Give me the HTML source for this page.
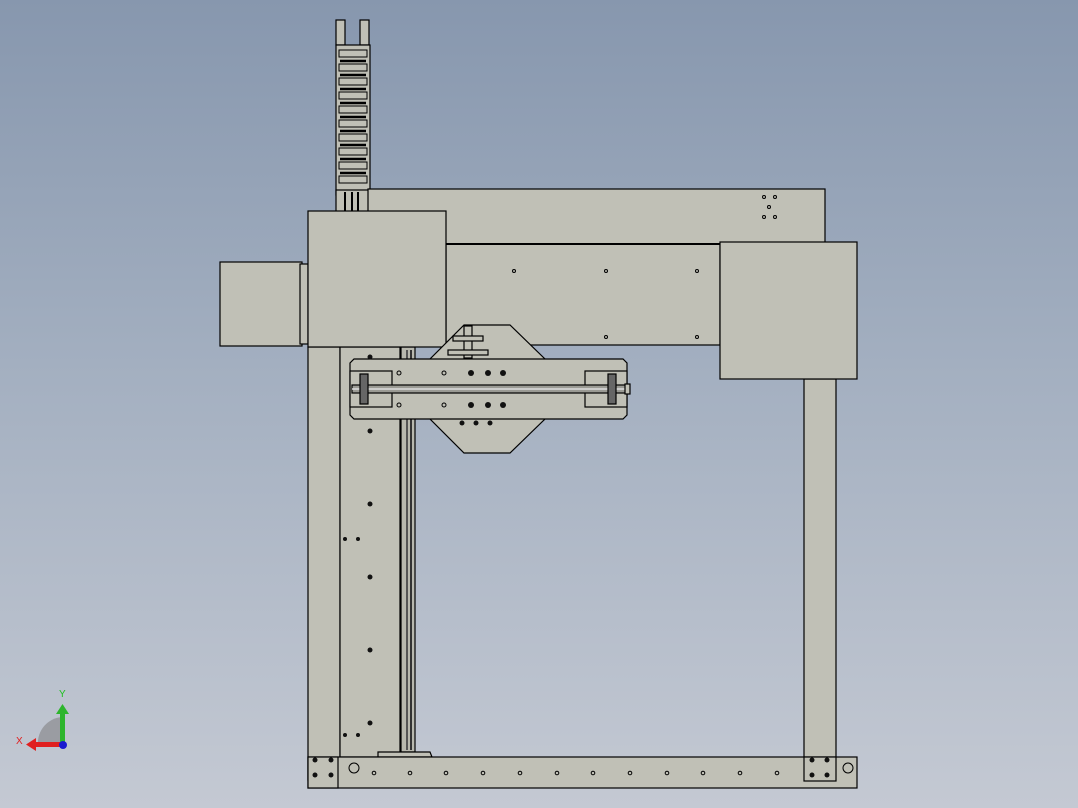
<!DOCTYPE html>
<html><head><style>
html,body{margin:0;padding:0;width:1078px;height:808px;overflow:hidden}
body{background:linear-gradient(to bottom,#8797ae 0%,#a3afc0 45%,#c4c9d3 100%)}
svg{position:absolute;left:0;top:0}
</style></head><body>
<svg width="1078" height="808" viewBox="0 0 1078 808" xmlns="http://www.w3.org/2000/svg">
<g stroke="#000" stroke-width="1.2" fill="#c0c0b6">
<!-- cable chain -->
<rect x="336" y="20" width="9" height="25"/><rect x="360" y="20" width="9" height="25"/>
<rect x="336" y="45" width="34" height="150" fill="#c0c0b6"/>
<g stroke-width="1">
<rect x="339" y="50" width="28" height="7"/><rect x="339" y="64" width="28" height="7"/>
<rect x="339" y="78" width="28" height="7"/><rect x="339" y="92" width="28" height="7"/>
<rect x="339" y="106" width="28" height="7"/><rect x="339" y="120" width="28" height="7"/>
<rect x="339" y="134" width="28" height="7"/><rect x="339" y="148" width="28" height="7"/>
<rect x="339" y="162" width="28" height="7"/><rect x="339" y="176" width="28" height="7"/>
</g>
<g stroke="#000" stroke-width="2.5">
<line x1="340" y1="61" x2="366" y2="61"/><line x1="340" y1="75" x2="366" y2="75"/><line x1="340" y1="89" x2="366" y2="89"/><line x1="340" y1="103" x2="366" y2="103"/><line x1="340" y1="117" x2="366" y2="117"/><line x1="340" y1="131" x2="366" y2="131"/><line x1="340" y1="145" x2="366" y2="145"/><line x1="340" y1="159" x2="366" y2="159"/><line x1="340" y1="173" x2="366" y2="173"/>
</g>
<rect x="336" y="190" width="34" height="22"/>
<line x1="345" y1="192" x2="345" y2="211" stroke-width="2"/><line x1="352" y1="192" x2="352" y2="211" stroke-width="2"/><line x1="358" y1="192" x2="358" y2="211" stroke-width="2"/>
<!-- top beam -->
<rect x="368" y="189" width="457" height="55"/>
<!-- lower beam -->
<rect x="446" y="244" width="274" height="101"/>
<line x1="446" y1="244" x2="720" y2="244" stroke-width="2"/>
<!-- left column -->
<rect x="308" y="347" width="32" height="433"/>
<rect x="340" y="347" width="60" height="410"/>
<rect x="401" y="347" width="14" height="405" fill="#b8b8ae"/>
<line x1="407" y1="350" x2="407" y2="750" stroke="#555" stroke-width="2"/>
<line x1="411" y1="350" x2="411" y2="750" stroke="#333" stroke-width="2"/>
<path d="M378 757 L378 752 L430 752 L432 757Z"/>
<!-- right column -->
<rect x="804" y="379" width="32" height="400"/>
<!-- bottom beam -->
<rect x="308" y="757" width="549" height="31"/>
<rect x="308" y="757" width="30" height="31"/><rect x="804" y="757" width="32" height="24"/>
<!-- motor -->
<rect x="220" y="262" width="82" height="84"/>
<rect x="300" y="264" width="8" height="80"/>
<!-- left box -->
<rect x="308" y="211" width="138" height="136"/>
<!-- right box -->
<rect x="720" y="242" width="137" height="137"/>
<!-- hex plate -->
<path d="M464 325 L510 325 L545 359 L545 419 L510 453 L464 453 L430 419 L430 359Z"/>
<rect x="464" y="326" width="8" height="32"/>
<rect x="453" y="336" width="30" height="5"/><rect x="448" y="350" width="40" height="5"/>
<!-- carriage -->
<path d="M354 359 L623 359 L627 363 L627 415 L623 419 L354 419 L350 415 L350 363Z"/>
<rect x="350" y="371" width="42" height="36"/><rect x="585" y="371" width="42" height="36"/>
<rect x="352" y="385" width="275" height="8" fill="#9a9a94"/>
<line x1="352" y1="389" x2="627" y2="389" stroke="#ddd" stroke-width="1.5"/>
<rect x="625" y="384" width="5" height="10"/>
<rect x="360" y="374" width="8" height="30" fill="#666"/><rect x="608" y="374" width="8" height="30" fill="#666"/>
</g>
<g fill="#111">
<circle cx="471" cy="373" r="3"/><circle cx="488" cy="373" r="3"/><circle cx="503" cy="373" r="3"/>
<circle cx="471" cy="405" r="3"/><circle cx="488" cy="405" r="3"/><circle cx="503" cy="405" r="3"/>
<circle cx="462" cy="423" r="2.5"/><circle cx="476" cy="423" r="2.5"/><circle cx="490" cy="423" r="2.5"/>
<circle cx="370" cy="357" r="2.5"/><circle cx="370" cy="431" r="2.5"/><circle cx="370" cy="504" r="2.5"/>
<circle cx="370" cy="577" r="2.5"/><circle cx="370" cy="650" r="2.5"/><circle cx="370" cy="723" r="2.5"/>
<circle cx="345" cy="539" r="2"/><circle cx="358" cy="539" r="2"/><circle cx="345" cy="735" r="2"/><circle cx="358" cy="735" r="2"/>
<circle cx="315" cy="760" r="2.5"/><circle cx="331" cy="760" r="2.5"/><circle cx="315" cy="775" r="2.5"/><circle cx="331" cy="775" r="2.5"/>
<circle cx="812" cy="760" r="2.5"/><circle cx="827" cy="760" r="2.5"/><circle cx="812" cy="775" r="2.5"/><circle cx="827" cy="775" r="2.5"/>
</g>
<g fill="none" stroke="#000" stroke-width="1">
<circle cx="354" cy="768" r="5"/><circle cx="848" cy="768" r="5"/>
<circle cx="410" cy="773" r="1.8"/><circle cx="446" cy="773" r="1.8"/><circle cx="483" cy="773" r="1.8"/><circle cx="520" cy="773" r="1.8"/><circle cx="557" cy="773" r="1.8"/><circle cx="593" cy="773" r="1.8"/><circle cx="630" cy="773" r="1.8"/><circle cx="667" cy="773" r="1.8"/><circle cx="703" cy="773" r="1.8"/><circle cx="740" cy="773" r="1.8"/><circle cx="777" cy="773" r="1.8"/><circle cx="374" cy="773" r="1.8"/>
<circle cx="514" cy="271" r="1.5"/><circle cx="606" cy="271" r="1.5"/><circle cx="697" cy="271" r="1.5"/><circle cx="606" cy="337" r="1.5"/><circle cx="697" cy="337" r="1.5"/>
<circle cx="764" cy="197" r="1.5"/><circle cx="775" cy="197" r="1.5"/><circle cx="769" cy="207" r="1.5"/><circle cx="764" cy="217" r="1.5"/><circle cx="775" cy="217" r="1.5"/>
<circle cx="399" cy="373" r="2"/><circle cx="444" cy="373" r="2"/><circle cx="399" cy="405" r="2"/><circle cx="444" cy="405" r="2"/>
</g>
<!-- triad -->
<path d="M38 745 A26 26 0 0 1 62 717 L62 745Z" fill="#9a9ca2"/>
<rect x="60" y="712" width="5" height="32" fill="#2db52d"/><path d="M56 714 L62.5 704 L69 714Z" fill="#2db52d"/>
<rect x="34" y="742" width="30" height="5" fill="#e02020"/><path d="M36 738 L26 744.5 L36 751Z" fill="#e02020"/>
<circle cx="63" cy="745" r="4" fill="#1a1ad0"/>
<text x="59" y="697" font-family="Liberation Sans,sans-serif" font-size="10" fill="#20c020">Y</text>
<text x="16" y="744" font-family="Liberation Sans,sans-serif" font-size="10" fill="#e02020">X</text>
</svg>
</body></html>
